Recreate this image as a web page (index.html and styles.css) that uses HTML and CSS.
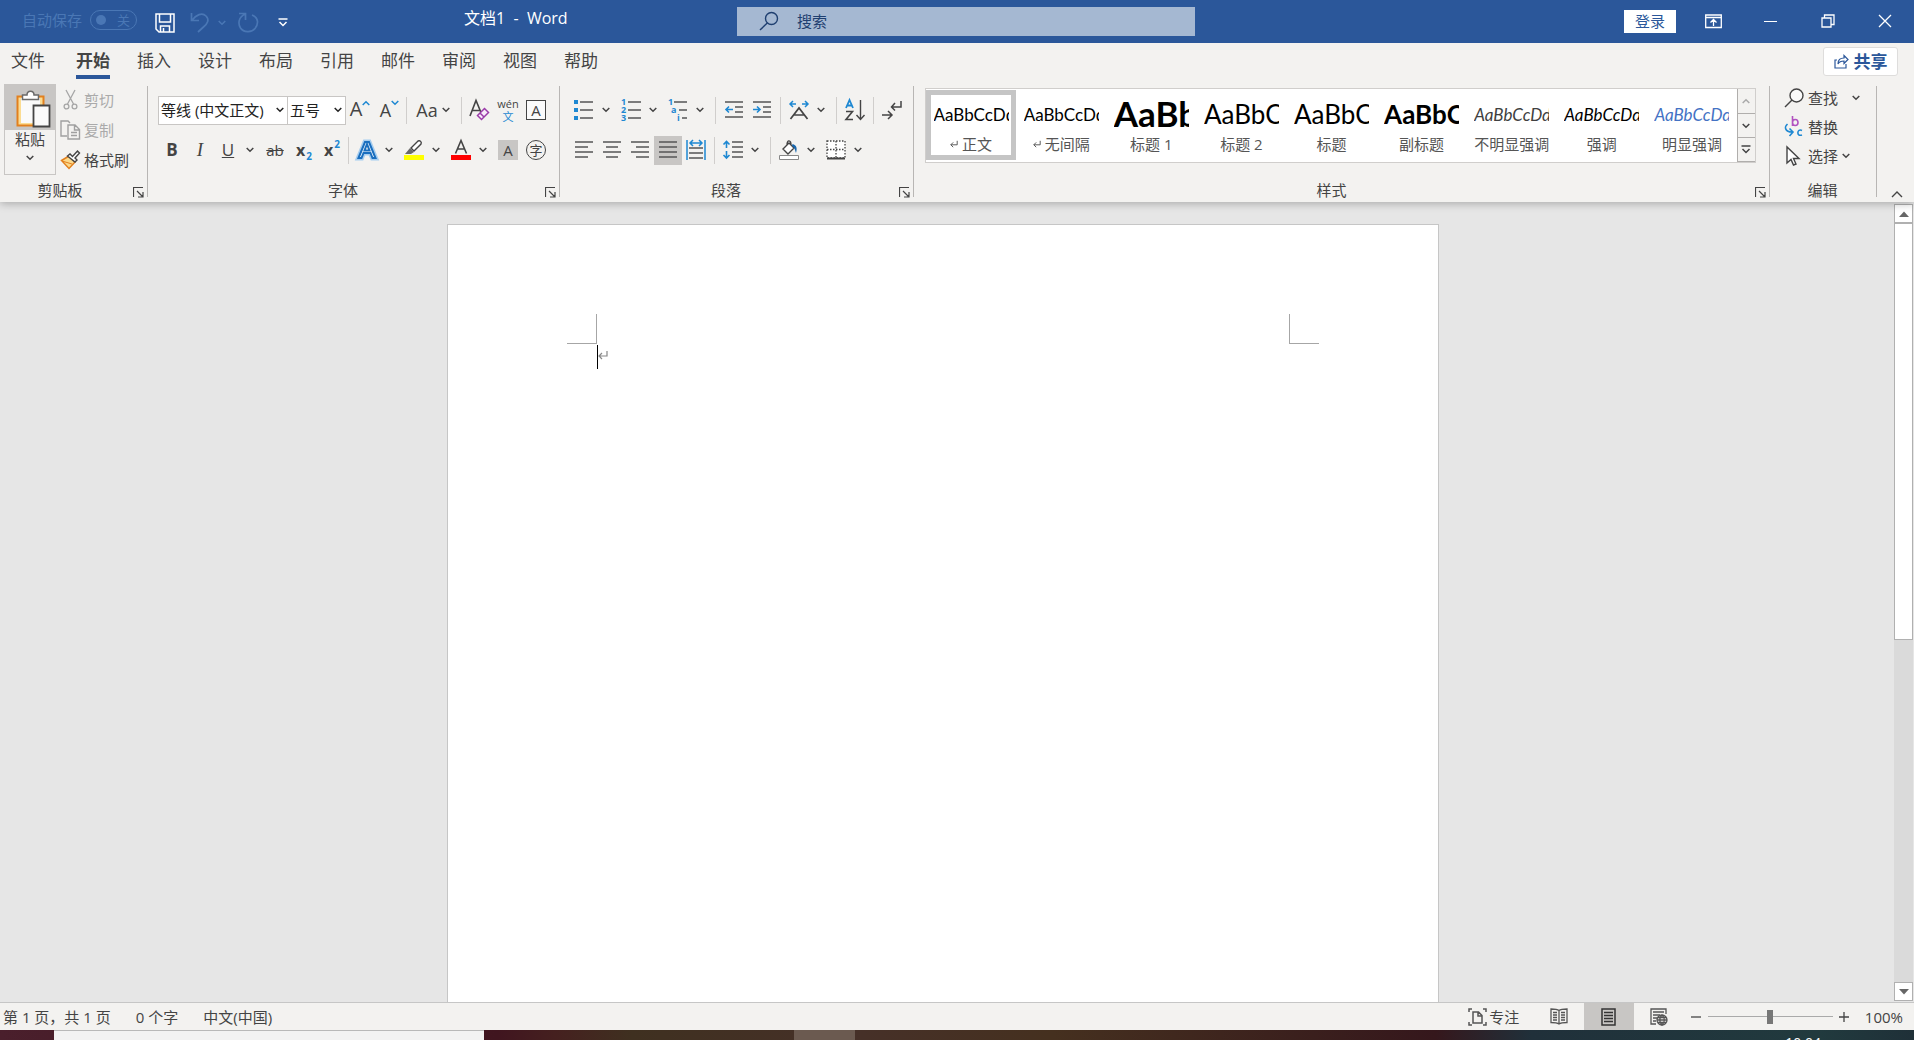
FILE: index.html
```html
<!DOCTYPE html>
<html lang="zh-CN">
<head>
<meta charset="utf-8">
<title>文档1 - Word</title>
<meta name="viewport" content="width=device-width, initial-scale=1">
<link rel="stylesheet" href="styles.css">
</head>
<body>
<svg class="defs" aria-hidden="true">
  <symbol id="chev" viewBox="0 0 8 6"><path d="M.7 1l3.3 3.3L7.300 1" fill="none" stroke="currentColor" stroke-width="1.500"/></symbol>
  <symbol id="more" viewBox="0 0 10 9"><path d="M.5 1h9M1.500 4l3.500 3.500L8.500 4" fill="none" stroke="currentColor" stroke-width="1.500"/></symbol>
  <symbol id="launch" viewBox="0 0 11 11"><path d="M.5 10V.5H10M4 4l5.500 5.500M10 5v5H5" fill="none" stroke="currentColor" stroke-width="1.200"/></symbol>
  <symbol id="pilcrow" viewBox="0 0 10 10"><path d="M9 1v5H1M4 3L1 6l3 3" fill="none" stroke="currentColor" stroke-width="1.200"/></symbol>
</svg>

<header class="titlebar">
  <div class="quick">
    <span class="autosave">自动保存</span>
    <button class="toggle" aria-label="自动保存开关"><i></i><span>关</span></button>
    <button class="q save" aria-label="保存"><svg width="20" height="20" viewBox="0 0 20 20" fill="none" stroke="#fff" stroke-width="1.500"><path d="M1 1h18v18H4l-3-3zM4.500 1v8h11V1M5.500 19v-6h9v6M8.500 15v4"/></svg></button>
    <button class="q undo dim" aria-label="撤消"><svg width="20" height="21" viewBox="0 0 20 21" fill="none" stroke="currentColor" stroke-width="1.700"><path d="M1.500 1v7.500H9M2 8.300C6 3 12 0 16 4s1 8-2 10.500L8 20"/></svg></button>
    <button class="q chevq dim" aria-label="撤消列表"><svg width="8" height="6"><use href="#chev"/></svg></button>
    <button class="q redo dim" aria-label="重复"><svg width="21" height="21" viewBox="0 0 21 21" fill="none" stroke="currentColor" stroke-width="1.700"><path d="M1 1.500h6.500V8M7.500 2C0 5 0 12 2.500 16c3 4.500 11 5 14.500.5S21 6 14 3"/></svg></button>
    <button class="q" aria-label="自定义快速访问工具栏"><svg width="10" height="9"><use href="#more"/></svg></button>
  </div>
  <h1 class="doc-title">文档1 &nbsp;- &nbsp;Word</h1>
  <label class="search"><svg width="20" height="20" viewBox="0 0 20 20" fill="none" stroke="#1f3f70" stroke-width="1.400"><circle cx="12.500" cy="7.500" r="6"/><path d="M8.300 12L1 19"/></svg><input type="text" placeholder="搜索" aria-label="搜索"></label>
  <div class="window">
    <button class="login">登录</button>
    <button aria-label="功能区显示选项"><svg width="17" height="15" viewBox="0 0 17 15" fill="none" stroke="#fff" stroke-width="1.300"><path d="M.7 1h15.600v12.500H.7zM1 3.500h15M8.500 12V6M5.500 8.500l3-3 3 3"/></svg></button>
    <button aria-label="最小化"><svg width="14" height="14" stroke="#fff"><path d="M0 7.500h13"/></svg></button>
    <button aria-label="还原"><svg width="14" height="14" fill="none" stroke="#fff" stroke-width="1.300"><path d="M1 4h9v9H1zM3.500 4V1H13v9.500h-3"/></svg></button>
    <button aria-label="关闭"><svg width="14" height="14" stroke="#fff" stroke-width="1.300"><path d="M1 1l12 12M13 1L1 13"/></svg></button>
  </div>
</header>

<nav class="tabs">
  <a href="#">文件</a><a href="#" class="active">开始</a><a href="#">插入</a><a href="#">设计</a><a href="#">布局</a><a href="#">引用</a><a href="#">邮件</a><a href="#">审阅</a><a href="#">视图</a><a href="#">帮助</a>
  <button class="share"><svg width="15" height="15" viewBox="0 0 15 15" fill="none" stroke="#2b579a" stroke-width="1.200"><path d="M3 6H1v8h11v-4M4 10c0-4 2-6 6-6V1.500l4 4-4 4V7C7 7 5 8 4 10z"/></svg>共享</button>
</nav>

<section class="ribbon">
  <div class="group clipboard">
    <div class="body">
      <button class="paste">
        <span class="paste-top"><svg width="36" height="38" viewBox="0 0 36 38"><path d="M2.500 6.500h26v29h-26z" fill="#fbdc92" stroke="#e2801e" stroke-width="2"/><path d="M6 8h19v25H6z" fill="#fafafa"/><path d="M7.500 9.500V5H12c0-5 7-5 7 0h4.500v4.500z" fill="#fff" stroke="#6a6a6a" stroke-width="1.500"/><path d="M18.500 15.500h16v21h-16z" fill="#fafafa" stroke="#444" stroke-width="1.800"/></svg></span>
        <span>粘贴</span><svg width="8" height="6"><use href="#chev"/></svg>
      </button>
      <div class="clip-list">
        <button class="off"><svg width="21" height="20" viewBox="0 0 21 20" fill="none" stroke="#a6a6a6" stroke-width="1.300"><path d="M6 0l7.500 14M15 0L7.500 14"/><circle cx="6.500" cy="16.500" r="2.400"/><circle cx="14.500" cy="16.500" r="2.400"/></svg>剪切</button>
        <button class="off"><svg width="21" height="20" viewBox="0 0 21 20" fill="none" stroke="#a0a0a0" stroke-width="1.400"><path d="M7 16H1V1h7l2 2M8 5h7l4.500 4.500V19H8zM14.500 5v5h5M11 12.500h6M11 15.500h6"/></svg>复制</button>
        <button><svg width="21" height="20" viewBox="0 0 21 20"><path d="M1.500 10.500L9 6l6 6-6 6.500z" fill="#fbd98b" stroke="#e2801e" stroke-width="1.500"/><path d="M2 11l10 3" stroke="#e2801e"/><path d="M7.500 6l2.500-2 2.500 2.500 5-5.500L19.500 3 15 8l2 2-2 2z" fill="#fff" stroke="#444" stroke-width="1.400"/></svg>格式刷</button>
      </div>
    </div>
    <footer><span>剪贴板</span><button aria-label="剪贴板设置"><svg width="11" height="11"><use href="#launch"/></svg></button></footer>
  </div>

  <div class="group font">
    <div class="body rows">
      <div class="row">
        <label class="combo family"><input type="text" value="等线 (中文正文)" aria-label="字体"><svg width="8" height="6"><use href="#chev"/></svg></label>
        <label class="combo size"><input type="text" value="五号" aria-label="字号"><svg width="8" height="6"><use href="#chev"/></svg></label>
        <button class="t grow" aria-label="增大字号"><span class="l20">A</span><svg width="8" height="6" class="flip blue"><use href="#chev"/></svg></button>
        <button class="t grow" aria-label="减小字号"><span class="l18">A</span><svg width="8" height="6" class="blue"><use href="#chev"/></svg></button>
        <i class="sep"></i>
        <button class="t wide" aria-label="更改大小写"><span class="l18">Aa</span><svg width="8" height="6"><use href="#chev"/></svg></button>
        <i class="sep"></i>
        <button class="t" aria-label="清除格式"><svg width="22" height="22" viewBox="0 0 22 22" fill="none" stroke="#444" stroke-width="1.600"><path d="M1 17L7 1.500l5 12M3.500 11.500h7"/><path d="M8.500 16.500l7-7 4 4-7 7zM11 14l4 4" fill="#f8eafa" stroke="#9a3ba8" stroke-width="1.500"/></svg></button>
        <button class="t pinyin" aria-label="拼音指南"><span>wén</span><b>文</b></button>
        <button class="t" aria-label="字符边框"><span class="boxed">A</span></button>
      </div>
      <div class="row">
        <button class="t bold" aria-label="加粗">B</button>
        <button class="t ital" aria-label="倾斜">I</button>
        <button class="t under" aria-label="下划线">U</button>
        <button class="c" aria-label="下划线样式"><svg width="8" height="6"><use href="#chev"/></svg></button>
        <button class="t strike" aria-label="删除线">ab</button>
        <button class="t script" aria-label="下标">x<sub>2</sub></button>
        <button class="t script" aria-label="上标">x<sup>2</sup></button>
        <i class="sep"></i>
        <button class="t" aria-label="文本效果"><svg width="22" height="22" viewBox="0 0 22 22" fill="none"><path d="M2.500 19L9 3h4l6.500 16h-3L14.500 14h-7L5.500 19z" stroke="#a6cdef" stroke-width="5"/><path d="M2.500 19L9 3h4l6.500 16h-3L14.500 14h-7L5.500 19zM8.500 11.500h5L11 5z" fill="#fff" stroke="#1a6fbf" stroke-width="2"/></svg></button>
        <button class="c" aria-label="文本效果列表"><svg width="8" height="6"><use href="#chev"/></svg></button>
        <button class="t" aria-label="突出显示"><svg width="20" height="20" viewBox="0 0 20 20"><path d="M7 8l7-7c2-1 4 1 3 3l-7 7z" fill="#fff" stroke="#444" stroke-width="1.400"/><path d="M1 14l5-6 4 4-3 2z" fill="#6a6a6a"/><path d="M0 15h20v5H0z" fill="#ff0"/></svg></button>
        <button class="c" aria-label="突出显示颜色"><svg width="8" height="6"><use href="#chev"/></svg></button>
        <button class="t" aria-label="字体颜色"><svg width="20" height="20" viewBox="0 0 20 20"><path d="M4.500 13.500L10 .5l5.500 13M6.500 9h7" fill="none" stroke="#444" stroke-width="1.600"/><path d="M0 15h20v5H0z" fill="#f00"/></svg></button>
        <button class="c" aria-label="字体颜色列表"><svg width="8" height="6"><use href="#chev"/></svg></button>
        <button class="t" aria-label="字符底纹"><span class="shaded">A</span></button>
        <button class="t" aria-label="带圈字符"><span class="circled">字</span></button>
      </div>
    </div>
    <footer><span>字体</span><button aria-label="字体设置"><svg width="11" height="11"><use href="#launch"/></svg></button></footer>
  </div>

  <div class="group para">
    <div class="body rows">
      <div class="row">
        <button class="t" aria-label="项目符号"><svg width="20" height="20" viewBox="0 0 20 20"><path d="M0 0h4v4H0zM0 8h4v4H0zM0 16h4v4H0z" fill="#1e88d2"/><path d="M6 2h13M6 10h13M6 18h13" stroke="#555" stroke-width="1.500"/></svg></button>
        <button class="c" aria-label="项目符号库"><svg width="8" height="6"><use href="#chev"/></svg></button>
        <button class="t" aria-label="编号"><svg width="20" height="22" viewBox="0 0 20 22"><path d="M7 3h13M7 11h13M7 19h13" stroke="#555" stroke-width="1.500"/><g class="num"><text x="0" y="6">1</text><text x="0" y="14">2</text><text x="0" y="22">3</text></g></svg></button>
        <button class="c" aria-label="编号库"><svg width="8" height="6"><use href="#chev"/></svg></button>
        <button class="t" aria-label="多级列表"><svg width="20" height="22" viewBox="0 0 20 22"><path d="M6 3h13M11 11h8M14 19h5" stroke="#555" stroke-width="1.500"/><g class="num"><text x="0" y="6">1</text><text x="3" y="14">a</text><text x="9" y="22">i</text></g></svg></button>
        <button class="c" aria-label="列表库"><svg width="8" height="6"><use href="#chev"/></svg></button>
        <i class="sep"></i>
        <button class="t" aria-label="减少缩进量"><svg width="20" height="20" viewBox="0 0 20 20" fill="none"><path d="M1 2h18M11 7h8M11 12h8M1 17h18" stroke="#555" stroke-width="1.500"/><path d="M9 9.500H2M5 6.500l-3 3 3 3" stroke="#1e88d2" stroke-width="1.600"/></svg></button>
        <button class="t" aria-label="增加缩进量"><svg width="20" height="20" viewBox="0 0 20 20" fill="none"><path d="M1 2h18M11 7h8M11 12h8M1 17h18" stroke="#555" stroke-width="1.500"/><path d="M1 9.500h7M5 6.500l3 3-3 3" stroke="#1e88d2" stroke-width="1.600"/></svg></button>
        <i class="sep"></i>
        <button class="t" aria-label="中文版式"><svg width="20" height="20" viewBox="0 0 20 20" fill="none"><path d="M1.500 19L10 8l8.500 11M5 15h10" stroke="#444" stroke-width="1.700"/><path d="M7 4H1M4 1L1 4l3 3M13 4h6M16 1l3 3-3 3" stroke="#1e88d2" stroke-width="1.500"/></svg></button>
        <button class="c" aria-label="中文版式列表"><svg width="8" height="6"><use href="#chev"/></svg></button>
        <i class="sep"></i>
        <button class="t" aria-label="排序"><svg width="20" height="22" viewBox="0 0 20 22" fill="none"><path d="M1 9L4.500 1 8 9M2 6.500h5" stroke="#1e88d2" stroke-width="1.800"/><path d="M1 12.500h6.500L1 20.500h7" stroke="#444" stroke-width="1.600"/><path d="M15.500 1v19M11.500 16l4 4.500 4-4.500" stroke="#444" stroke-width="1.400"/></svg></button>
        <i class="sep"></i>
        <button class="t" aria-label="显示编辑标记"><svg width="20" height="20" viewBox="0 0 20 20" fill="none" stroke="#444" stroke-width="1.500"><path d="M19 1v6H9.500M13 3L9.500 7l3.500 3.500M0 15h9.500M6 11l4 4-4 4"/></svg></button>
      </div>
      <div class="row">
        <button class="t" aria-label="左对齐"><svg width="20" height="20" stroke="#555" stroke-width="1.500"><path d="M1 2h18M1 7h13M1 12h18M1 17h13"/></svg></button>
        <button class="t" aria-label="居中"><svg width="20" height="20" stroke="#555" stroke-width="1.500"><path d="M1 2h18M4 7h12M1 12h18M4 17h12"/></svg></button>
        <button class="t" aria-label="右对齐"><svg width="20" height="20" stroke="#555" stroke-width="1.500"><path d="M1 2h18M6 7h13M1 12h18M6 17h13"/></svg></button>
        <button class="t pressed" aria-label="两端对齐"><svg width="20" height="20" stroke="#555" stroke-width="1.500"><path d="M1 2h18M1 7h18M1 12h18M1 17h18"/></svg></button>
        <button class="t" aria-label="分散对齐"><svg width="20" height="20" viewBox="0 0 20 20" fill="none"><path d="M1 0v20M19 0v20M4 3h12M7 0L4 3l3 3M13 0l3 3-3 3" stroke="#1e88d2" stroke-width="1.500"/><path d="M3 8h14M3 13h14M3 18h14" stroke="#555" stroke-width="1.500"/></svg></button>
        <i class="sep"></i>
        <button class="t" aria-label="行和段落间距"><svg width="20" height="20" viewBox="0 0 20 20" fill="none"><path d="M9 2h11M9 7h11M9 12h11M9 17h11" stroke="#555" stroke-width="1.500"/><path d="M3.500 8V2M.5 4.500l3-3 3 3M3.500 11v7M.5 15l3 3 3-3" stroke="#1e88d2" stroke-width="1.600"/></svg></button>
        <button class="c" aria-label="行距列表"><svg width="8" height="6"><use href="#chev"/></svg></button>
        <i class="sep"></i>
        <button class="t" aria-label="底纹"><svg width="20" height="20" viewBox="0 0 20 20"><path d="M4 9l6-6 5 5-6 6zM8 5c0-6 4-5 4 0" fill="#fff" stroke="#444" stroke-width="1.400"/><path d="M13.500 4c4 1 5 4 3.500 9-1-3-1-5-4-7z" fill="#1766ad"/><path d="M.5 15.500h19v4H.5z" fill="#fff" stroke="#888"/></svg></button>
        <button class="c" aria-label="底纹颜色"><svg width="8" height="6"><use href="#chev"/></svg></button>
        <button class="t" aria-label="边框"><svg width="20" height="20" viewBox="0 0 20 20" fill="none"><path d="M1 1h18v17H1zM10 1v17M1 9.500h18" fill="#fff" stroke="#444" stroke-width="1.300" stroke-dasharray="1.500 1.500"/><path d="M1 18.500h18" stroke="#444" stroke-width="2"/></svg></button>
        <button class="c" aria-label="边框列表"><svg width="8" height="6"><use href="#chev"/></svg></button>
      </div>
    </div>
    <footer><span>段落</span><button aria-label="段落设置"><svg width="11" height="11"><use href="#launch"/></svg></button></footer>
  </div>

  <div class="group styles">
    <div class="body">
      <div class="gallery">
        <button class="style selected"><span class="sample">AaBbCcDd</span><span class="name"><svg width="8" height="8"><use href="#pilcrow"/></svg>正文</span></button>
        <button class="style"><span class="sample">AaBbCcDd</span><span class="name"><svg width="8" height="8"><use href="#pilcrow"/></svg>无间隔</span></button>
        <button class="style"><span class="sample h1">AaBb</span><span class="name">标题 1</span></button>
        <button class="style"><span class="sample h2">AaBbC</span><span class="name">标题 2</span></button>
        <button class="style"><span class="sample h2">AaBbC</span><span class="name">标题</span></button>
        <button class="style"><span class="sample h2 strong">AaBbC</span><span class="name">副标题</span></button>
        <button class="style"><span class="sample em soft">AaBbCcDd</span><span class="name">不明显强调</span></button>
        <button class="style"><span class="sample em">AaBbCcDd</span><span class="name">强调</span></button>
        <button class="style"><span class="sample em accent">AaBbCcDd</span><span class="name">明显强调</span></button>
        <div class="gallery-nav">
          <button class="off" aria-label="上一行"><svg width="8" height="6" class="flip"><use href="#chev"/></svg></button>
          <button aria-label="下一行"><svg width="8" height="6"><use href="#chev"/></svg></button>
          <button aria-label="其他"><svg width="10" height="9"><use href="#more"/></svg></button>
        </div>
      </div>
    </div>
    <footer><span>样式</span><button aria-label="样式设置"><svg width="11" height="11"><use href="#launch"/></svg></button></footer>
  </div>

  <div class="group edit">
    <div class="body">
      <button><svg width="20" height="20" viewBox="0 0 20 20" fill="none" stroke="#444" stroke-width="1.400"><circle cx="12.500" cy="7.500" r="6.500" fill="#fafafa"/><path d="M8 12L1 19"/></svg>查找<svg width="8" height="6" class="far"><use href="#chev"/></svg></button>
      <button><svg width="20" height="22" viewBox="0 0 20 22" fill="none" stroke-width="1.600"><path d="M8.500 0v10M8.500 6.500c0-4 5.500-4 5.500 0s-5.500 4-5.500 0" stroke="#b152c0"/><path d="M18 14.500c-5-2.500-6 6.500 0 4.500M3.500 8C0 11 1 16 8 16M5.500 12.500L9 16l-3.500 4" stroke="#1e88d2"/></svg>替换</button>
      <button><svg width="20" height="20" viewBox="0 0 20 20"><path d="M3 1v16l4-3.500 2.500 5.500 2.500-1-2.500-5.500H15z" fill="#fff" stroke="#444" stroke-width="1.400"/></svg>选择<svg width="8" height="6"><use href="#chev"/></svg></button>
    </div>
    <footer><span>编辑</span></footer>
  </div>
  <button class="collapse" aria-label="折叠功能区"><svg width="12" height="8" viewBox="0 0 12 8" fill="none" stroke="#444" stroke-width="1.400"><path d="M1 7l5-5 5 5"/></svg></button>
</section>

<main class="workspace">
  <div class="canvas">
    <article class="page">
      <i class="corner left"></i><i class="corner right"></i>
      <p class="line"><i class="caret"></i><svg width="10" height="10"><use href="#pilcrow"/></svg></p>
    </article>
  </div>
  <div class="scroll">
    <button aria-label="向上滚动"><svg width="10" height="6"><path d="M0 6l5-5.500L10 6z" fill="#666"/></svg></button>
    <div class="track"><div class="thumb"></div></div>
    <button aria-label="向下滚动"><svg width="10" height="6"><path d="M0 0l5 5.500L10 0z" fill="#666"/></svg></button>
  </div>
</main>

<footer class="status">
  <span>第 1 页，共 1 页</span><span>0 个字</span><span>中文(中国)</span>
  <div class="views">
    <button class="focus"><svg width="19" height="18" viewBox="0 0 19 18" fill="none" stroke="#555" stroke-width="1.500"><path d="M4 1H1v3M1 14v3h3M15 1h3v3M18 14v3h-3M5 4h5.500L14 7.500V15H5zM10 4v4h4"/></svg>专注</button>
    <button aria-label="阅读视图"><svg width="18" height="17" viewBox="0 0 18 17" fill="none" stroke="#555" stroke-width="1.300"><path d="M9 2.500C7 1 4 1 1 1v13.500c3 0 6 0 8 1.500 2-1.500 5-1.500 8-1.500V1c-3 0-6 0-8 1.500zM9 2.500V16M3 4.500h4M3 7h4M3 9.500h4M3 12h4M11 4.500h4M11 7h4M11 9.500h4M11 12h4"/></svg></button>
    <button class="on" aria-label="页面视图"><svg width="15" height="18" viewBox="0 0 15 18" fill="none" stroke="#333" stroke-width="1.500"><path d="M1 1h13v16H1zM3 4.500h9M3 7.500h9M3 10.500h9M3 13.500h9"/></svg></button>
    <button aria-label="Web 版式视图"><svg width="18" height="18" viewBox="0 0 18 18" fill="none" stroke="#555" stroke-width="1.300"><path d="M6 16H1V1h15v5M3 4h11M3 7h7M3 10h4M3 13h3"/><circle cx="12" cy="12" r="5" fill="#f3f2f0"/><path d="M7 12h10M12 7c-3 3-3 7 0 10 3-3 3-7 0-10M8 9.500h8M8 14.500h8"/></svg></button>
  </div>
  <div class="zoom">
    <button aria-label="缩小"><svg width="12" height="12" stroke="#444" stroke-width="1.300"><path d="M1 6h10"/></svg></button>
    <input type="range" min="0" max="100" value="50" aria-label="显示比例">
    <button aria-label="放大"><svg width="12" height="12" stroke="#444" stroke-width="1.300"><path d="M1 6h10M6 1v10"/></svg></button>
    <span>100%</span>
  </div>
</footer>
<div class="taskbar"><div class="task-search"></div><div class="task-apps"><i></i></div><time>10:04</time></div>
</body>
</html>
```
FILE: styles.css
```css
* { box-sizing: border-box; }
body {
  margin: 0;
  height: 100vh;
  display: flex;
  flex-direction: column;
  overflow: hidden;
  background: #e6e6e6;
  color: #444;
  font: 15px/20px "Open Sans", "Noto Sans CJK SC", sans-serif;
}
button, input { font: inherit; color: inherit; }
button { border: 0; padding: 0; background: none; display: flex; align-items: center; justify-content: center; white-space: nowrap; }
svg { flex: none; overflow: visible; display: block; }
.defs { position: absolute; width: 0; height: 0; }
.flip { transform: scaleY(-1); }
.blue { color: #1e88d2; }

/* Title bar */
.titlebar { display: flex; align-items: flex-start; height: 43px; flex: none; background: #2b579a; color: #fff; }
.quick { display: flex; align-items: center; width: 464px; height: 43px; padding-left: 22px; }
.autosave { color: #4a77b5; width: 68px; padding-bottom: 4px; }
.toggle { width: 47px; height: 20px; margin: 0 18px 4px 0; border: 1px solid #4a77b5; border-radius: 10px; color: #4a77b5; justify-content: space-between; padding: 0 6px 0 5px; font-size: 13px; }
.toggle i { width: 10px; height: 10px; border-radius: 5px; background: #4a77b5; }
.q { height: 43px; margin-top: 2px; }
.dim { color: #4a77b5; }
.save { margin-right: 15px; }
.undo { margin-right: 8px; }
.chevq { margin-right: 12px; }
.redo { margin-right: 19px; }
.doc-title { margin: 0; font-size: 16px; line-height: 36px; font-weight: 400; width: 273px; white-space: nowrap; }
.search { display: flex; align-items: center; gap: 18px; width: 458px; height: 29px; margin-top: 7px; padding: 0 0 2px 22px; background: #a5b8d2; color: #1f3f70; }
.search input { flex: 1; min-width: 0; border: 0; padding: 0; background: none; }
.search input::placeholder { color: #1f3f70; opacity: 1; }
.window { display: flex; margin-left: auto; padding-right: 1px; height: 42px; align-items: center; }
.window button { width: 57px; height: 42px; }
.window .login { width: 52px; height: 23px; margin-right: 9px; background: #fff; color: #2b579a; }

/* Tabs */
.tabs { display: flex; height: 41px; flex: none; background: #f3f2f0; padding-left: 11px; gap: 27px; position: relative; z-index: 1; }
.tabs a { color: #444; text-decoration: none; font-size: 17px; line-height: 36px; height: 36px; width: 34px; white-space: nowrap; }
.tabs a:first-child { margin-right: 4px; }
.tabs .active { font-weight: 700; border-bottom: 4px solid #2b579a; }
.share { margin: 4px 16px 0 auto; width: 75px; height: 29px; gap: 5px; background: #fff; border: 1px solid #dedddc; border-radius: 3px; color: #2b579a; font-size: 17px; font-weight: 700; }

/* Ribbon */
.ribbon { display: flex; height: 118px; flex: none; background: #f3f2f0; position: relative; box-shadow: 0 2px 8px rgba(0,0,0,.25); }
.group { display: flex; flex-direction: column; position: relative; flex: none; }
.group::after { content: ""; width: 1px; background: #b8b6b4; position: absolute; right: 0; top: 2px; bottom: 5px; }
.body { display: flex; height: 94px; }
.group > footer { display: flex; height: 24px; justify-content: center; position: relative; padding-right: 32px; }
.group > footer span { line-height: 24px; }
.group > footer button { position: absolute; right: 4px; top: 9px; }
.clipboard { width: 148px; padding-left: 4px; }
.paste { width: 52px; height: 91px; border: 1px solid #c8c6c4; flex-direction: column; justify-content: flex-start; gap: 6px; }
.paste-top { background: #c8c6c4; width: 100%; height: 45px; padding: 5px 0 0 10px; margin-bottom: -7px; }
.clip-list { display: flex; flex-direction: column; padding: 1px 0 0 4px; }
.clip-list button { height: 30px; gap: 3px; justify-content: flex-start; }
.off { color: #aaa; }

.rows { flex-direction: column; padding-top: 6px; }
.row { display: flex; align-items: center; height: 40px; }
.t { width: 28px; height: 29px; }
.c { width: 19px; height: 29px; padding-right: 4px; }
.sep { width: 1px; height: 27px; background: #d0cecc; }
.pressed { background: #c8c6c4; }

.font { width: 412px; padding-left: 10px; }
.combo { display: flex; align-items: center; height: 29px; background: #fff; border: 1px solid #c8c6c4; padding: 0 3px 0 2px; color: #222; }
.combo input { flex: 1; min-width: 0; border: 0; padding: 0; background: none; }
.family { width: 130px; }
.size { width: 59px; margin-left: -1px; }
.grow { align-items: flex-start; }
.grow + .grow { padding-left: 3px; }
.l20 { font-size: 20px; line-height: 26px; }
.l18 { font-size: 18px; line-height: 28px; }
.grow svg { margin-top: 4px; }
.grow + .sep { margin-left: 4px; }
.wide { width: 54px; gap: 4px; padding-right: 2px; }
.wide + .sep + .t { margin-left: 4px; }
.pinyin { flex-direction: column; font-size: 11px; line-height: 13px; }
.pinyin b { color: #1e88d2; font-weight: 400; font-size: 11px; line-height: 13px; }
.boxed { width: 20px; height: 20px; border: 1px solid #444; background: #fafafa; line-height: 18px; }
.shaded { width: 20px; height: 20px; background: #c8c6c4; }
.circled { width: 20px; height: 20px; border: 1px solid #444; border-radius: 10px; font-size: 13px; line-height: 18px; }
.bold { font-weight: 700; font-size: 17px; }
.ital { font-style: italic; font-family: "Liberation Serif", serif; font-size: 19px; }
.under { text-decoration: underline; font-size: 17px; }
.strike { text-decoration: line-through; }
.script { font-weight: 700; font-size: 16px; gap: 1px; padding-left: 2px; }
.script sub, .script sup { font-size: 10px; line-height: 10px; color: #1e88d2; }
.script sub { margin-top: 12px; }
.script sup { margin-bottom: 12px; }
.font .row + .row .sep { margin: 0 4px 0 3px; }

.para { width: 354px; padding-left: 10px; }
.para .sep { margin: 0 4px; }
.num { font: 700 9px "Open Sans", sans-serif; fill: #1e88d2; }

.styles { flex: 1; min-width: 0; padding-left: 11px; }
.styles .body { padding-top: 4px; }
.gallery { display: flex; flex: 1; height: 75px; margin-right: 14px; min-width: 0; background: #fff; border: 1px solid #d0cecc; overflow: hidden; }
.style { flex: 1; min-width: 0; height: 70px; margin-top: 1px; padding: 0 2px; border: 5px solid transparent; flex-direction: column; justify-content: flex-start; color: #555; }
.selected { border-color: #c5c5c5; }
.sample { width: 75px; height: 39px; line-height: 40px; overflow: hidden; text-align: left; color: #000; font-family: Lato, sans-serif; font-size: 17px; }
.h1 { font-size: 35px; font-weight: 700; line-height: 36px; }
.h2 { font-size: 26px; line-height: 38px; }
.strong { font-weight: 700; }
.em { font-style: italic; }
.soft { color: #404040; }
.accent { color: #4472c4; }
.name { display: flex; align-items: center; gap: 4px; line-height: 20px; }
.gallery-nav { width: 18px; flex: none; display: grid; grid-template-rows: 25px 24px 24px; background: #f3f2f0; }
.gallery-nav button { border-left: 1px solid #b0aeac; border-bottom: 1px solid #b0aeac; }

.edit { width: 107px; padding-left: 14px; }
.edit .body { flex-direction: column; align-items: flex-start; }
.edit .body button { height: 29px; gap: 4px; padding-bottom: 1px; }
.edit .far { margin-left: 10px; }
.group.edit > footer { padding-right: 16px; }
.collapse { width: 37px; align-self: flex-end; height: 12px; padding-left: 3px; margin-bottom: 2px; }

/* Document area */
.workspace { flex: 1; min-height: 0; display: flex; }
.canvas { flex: 1; min-width: 0; padding: 22px 9px 0 0; display: flex; justify-content: center; }
.page { width: 992px; background: #fff; border: 1px solid #c6c6c6; border-bottom: 0; position: relative; padding: 118px 148px 0; }
.corner { position: absolute; top: 89px; width: 30px; height: 30px; border-bottom: 1px solid #a6a6a6; }
.left { left: 119px; border-right: 1px solid #a6a6a6; }
.right { right: 119px; border-left: 1px solid #a6a6a6; }
.line { margin: 2px 0 0 1px; display: flex; color: #888; height: 24px; align-items: center; }
.line svg { margin-bottom: 4px; }
.caret { width: 1px; height: 24px; background: #000; }
.scroll { width: 19px; margin-right: 1px; padding: 2px 0 1px; display: flex; flex-direction: column; }
.scroll button { height: 19px; border: 1px solid #b0b0b0; background: #fff; flex: none; }
.track { flex: 1; background: #dadada; }
.thumb { height: 55%; background: #fff; border: 1px solid #b0b0b0; }

/* Status bar */
.status { height: 28px; flex: none; display: flex; align-items: center; border-top: 1px solid #c6c6c6; background: #f3f2f0; padding-left: 3px; gap: 25px; white-space: nowrap; }
.views { display: flex; margin-left: auto; height: 27px; }
.views button { width: 50px; }
.views .focus { width: 56px; gap: 2px; margin-right: 12px; }
.views .on { background: #c8c6c4; }
.zoom { display: flex; align-items: center; margin-right: 11px; margin-left: -19px; }
.zoom input { appearance: none; width: 125px; height: 14px; margin: 0 5px 0 6px; background: linear-gradient(#aaa, #aaa) center / 100% 1px no-repeat; }
.zoom input::-webkit-slider-thumb { appearance: none; width: 6px; height: 14px; background: #777; }
.zoom span { margin-left: 15px; }

/* Strip of the desktop taskbar */
.taskbar { height: 10px; flex: none; display: flex; overflow: hidden; background: linear-gradient(90deg, #4a1f2c 0, #40151f 26%, #45201f 29%, #3f3020 33%, #463028 45%, #45301f 55%, #35171c 75%, #20303a 80%, #213a3e 95%, #1f3038); }
.task-search { width: 430px; margin-left: 54px; background: #f2f2f2; border-top: 1px solid #b8b8b8; }
.task-apps { flex: 1; padding-left: 310px; }
.task-apps i { display: block; width: 61px; height: 10px; background: #6b5a50; }
.taskbar time { color: #fff; font-size: 14px; line-height: 20px; margin: 3px 93px 0 0; }
```
